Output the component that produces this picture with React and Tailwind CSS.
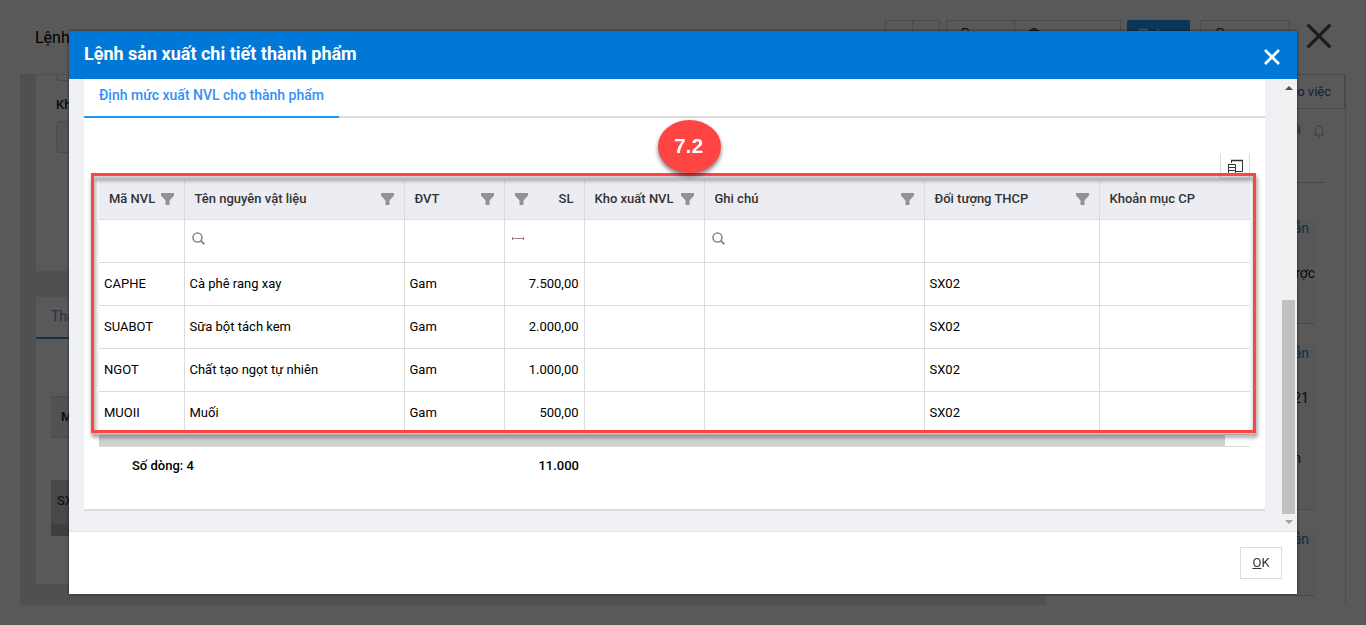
import { FaRegCopy, FaRegFloppyDisk, FaRegTrashCan } from "react-icons/fa6";

const columns = [
  { title: "Mã NVL", field: "code", filter: true, width: "w-[85px]" },
  { title: "Tên nguyên vật liệu", field: "name", filter: true, search: true, width: "w-[220px]" },
  { title: "ĐVT", field: "unit", filter: true, width: "w-[100px]" },
  { title: "SL", field: "qty", filter: true, range: true, right: true, width: "w-[80px]" },
  { title: "Kho xuất NVL", field: "store", filter: true, width: "w-[120px]" },
  { title: "Ghi chú", field: "note", filter: true, search: true, width: "w-[220px]" },
  { title: "Đối tượng THCP", field: "target", filter: true, width: "w-[175px]" },
  { title: "Khoản mục CP", field: "item", width: "" },
];

const rows = [
  { code: "CAPHE", name: "Cà phê rang xay", unit: "Gam", qty: "7.500,00", target: "SX02" },
  { code: "SUABOT", name: "Sữa bột tách kem", unit: "Gam", qty: "2.000,00", target: "SX02" },
  { code: "NGOT", name: "Chất tạo ngọt tự nhiên", unit: "Gam", qty: "1.000,00", target: "SX02" },
  { code: "MUOII", name: "Muối", unit: "Gam", qty: "500,00", target: "SX02" },
];

const notes = [
  { link: "Hướng dẫn", text: "Được", textPad: "pr-0", height: "h-[105px]" },
  { link: "Hướng dẫn", text: "2021", more: "bản", textPad: "pr-1.5", height: "h-[166px]" },
  { link: "Hướng dẫn", text: "", textPad: "pr-1.5", height: "h-[66px]" },
];

function CloseIcon({ className, strokeWidth }) {
  return (
    <svg viewBox="0 0 24 24" className={className} fill="none" stroke="currentColor" strokeWidth={strokeWidth}>
      <path d="M1.500 1.500 22.500 22.500M22.500 1.500 1.500 22.500" />
    </svg>
  );
}

function FilterIcon() {
  return (
    <svg viewBox="0 0 13 12" className="h-3 w-[13px] shrink-0" fill="#929292">
      <path d="M0 0h13v2.500L8.500 7.500V12h-4V7.500L0 2.500z" />
    </svg>
  );
}

function SearchIcon() {
  return (
    <svg viewBox="0 0 13 13" className="size-[13px]" fill="none" stroke="#8a8a8a">
      <circle cx="5.500" cy="5.500" r="4.500" strokeWidth="1.600" />
      <path d="M8.800 8.800 12.300 12.300" strokeWidth="2" />
    </svg>
  );
}

function PageHeader() {
  return (
    <header className="flex h-[74px] items-start pt-5 pl-[35px] pr-[34px]">
      <h1 className="flex-1 pt-1.5 text-base leading-6 text-black">Lệnh</h1>
      <span className="mr-1 pt-2 text-[13px] leading-5 font-medium">2 / 10</span>
      <div className="mr-1.5 flex">
        <button type="button" aria-label="Trước" className="h-8 w-7 border border-[#d4d4d4]">‹</button>
        <button type="button" aria-label="Sau" className="-ml-px h-8 w-7 border border-[#d4d4d4]">›</button>
      </div>
      <div className="mr-1.5 flex">
        <button type="button" className="flex h-8 w-[69px] items-center gap-1.5 border border-[#d4d4d4] px-[11px] pb-1 text-[13px]">
          <FaRegCopy className="size-3" />
          sao
        </button>
        <button type="button" className="-ml-px flex h-8 w-[107px] items-center gap-1.5 border border-[#d4d4d4] px-[13px] pb-1 text-[13px]">
          <FaRegTrashCan className="size-3" />
          xoa
        </button>
      </div>
      <button type="button" className="mr-2.5 flex h-8 w-[63px] items-center gap-1.5 rounded-xs bg-[#1f9bff] px-[11px] pb-1 text-[13px] text-white">
        <FaRegFloppyDisk className="size-3" />
        In
      </button>
      <button type="button" className="mr-4 flex h-8 w-[90px] items-center gap-1.5 rounded-xs border border-[#d4d4d4] px-3 pb-1 text-[13px] text-[#223a6b]">
        <FaRegCopy className="size-3" />
        xem
      </button>
      <button type="button" aria-label="Đóng trang" className="mt-[3px]">
        <CloseIcon className="size-[26px] text-[#505050]" strokeWidth={3} />
      </button>
    </header>
  );
}

function PageBody() {
  return (
    <div className="flex flex-1 px-5 pb-5">
      <main className="flex flex-1 flex-col bg-[#e4e4e4] px-4 pt-px pb-[21px]">
        <section className="h-[196px] bg-white px-5">
          <div className="h-1.5 w-60 rounded-b border border-t-0 border-[#d4d4d4]" />
          <label htmlFor="store" className="mt-3.5 block text-[13px] leading-5 font-medium">Kho</label>
          <input id="store" className="mt-1.5 h-8 w-60 rounded border border-[#d4d4d4] bg-[#f4f4f4]" />
        </section>
        <section className="mt-[26px] flex-1 bg-white">
          <div className="flex border-b border-[#d4d4d4]">
            <a href="#thanh-pham" className="-mb-px border-b-2 border-[#2196f3] px-[15px] pt-2 pb-2.5 text-sm leading-[22px] text-[#5b8fd8]">Thành</a>
          </div>
          <div className="mx-[15px] mt-[57px] h-[42px] border-y border-[#d0d0d0] bg-[#e9ebf1] px-2.5 text-[13px] leading-10 font-medium">Mã</div>
          <div className="mx-[15px] mt-[42px] h-11 bg-[#cdcdcd] px-1.5 text-[13px] leading-[42px]">SX02</div>
          <div className="mx-[15px] h-3 bg-[#b4b4b4]" />
        </section>
      </main>
      <aside className="w-[300px] border-r border-[#d8d8d8]">
        <div className="flex h-[35px] items-center justify-end border border-[#d0d0d0] pr-[13px] text-[13px] text-[#2368ad]">Giao việc</div>
        <div className="mr-5 flex h-[74px] items-start justify-end gap-3 border-b border-[#c8c8c8] pt-[11px] text-[13px] leading-5 text-[#2a7ab8]">
          Trao đổi
          <svg viewBox="0 0 12 14" className="mt-1 h-3.5 w-3" fill="none" stroke="#a4b8c8">
            <path d="M1 11h10L9.500 9V5.500a3.500 3.500 0 0 0-7 0V9zM5 13h2M6 1v1" />
          </svg>
        </div>
        <div className="mt-9 mr-[30px] flex flex-col gap-5">
          {notes.map((note, index) => (
            <div key={index} className={`border-b border-[#d4d4d4] bg-[#fafafa] text-right text-sm ${note.height}`}>
              <a href="#note" className="block pr-1.5 leading-[18px] text-[#2a86c0]">{note.link}</a>
              <p className={`mt-[27px] leading-[18px] ${note.textPad}`}>{note.text}</p>
              <p className="mt-[42px] pr-3.5 leading-[18px]">{note.more}</p>
            </div>
          ))}
        </div>
      </aside>
    </div>
  );
}

function MaterialTable() {
  return (
    <table className="w-full table-fixed border-collapse text-[13px] leading-5 text-black">
      <thead>
        <tr className="h-10 bg-[#ebedf2] text-[#333]">
          {columns.map((col) => (
            <th key={col.field} className={`border-r border-b border-[#dcdcdc] px-2.5 text-left font-medium last:border-r-0 ${col.width}`}>
              <div className={`flex items-center justify-between whitespace-nowrap ${col.right ? "flex-row-reverse" : ""}`}>
                {col.title}
                {col.filter && <FilterIcon />}
              </div>
            </th>
          ))}
        </tr>
      </thead>
      <tbody>
        <tr className="h-[43px]">
          {columns.map((col) => (
            <td key={col.field} className="border-r border-b border-[#dcdcdc] px-[7px] pb-1 last:border-r-0">
              {col.search && <SearchIcon />}
              {col.range && (
                <svg viewBox="0 0 12 5" className="h-[5px] w-3" fill="none" stroke="#a07a80">
                  <path d="M.5 1v3M11.500 1v3M.5 2.500h11" />
                </svg>
              )}
            </td>
          ))}
        </tr>
        {rows.map((row) => (
          <tr key={row.code} className="h-[43px]">
            {columns.map((col) => (
              <td key={col.field} className={`border-r border-b border-[#dcdcdc] px-[5px] whitespace-nowrap last:border-r-0 ${col.right ? "text-right" : ""}`}>
                {row[col.field]}
              </td>
            ))}
          </tr>
        ))}
      </tbody>
    </table>
  );
}

function DetailDialog() {
  return (
    <div role="dialog" aria-labelledby="dialog-title" className="relative flex flex-1 flex-col bg-white shadow-[0_0_3px_rgba(0,0,0,0.6)]">
      <div className="flex h-12 items-center justify-between bg-[#0078d7] pr-[17px] pl-[15px] text-white">
        <h2 id="dialog-title" className="pb-0.5 text-lg leading-6 font-bold">Lệnh sản xuất chi tiết thành phẩm</h2>
        <button type="button" aria-label="Đóng" className="pt-1">
          <CloseIcon className="size-4" strokeWidth={4} />
        </button>
      </div>

      <div className="flex flex-1 bg-[#f0f1f4] pl-[15px]">
        <div className="flex-1 pb-5">
          <div className="flex h-full flex-col border-b-2 border-[#dcdcdc] bg-white">
            <div className="flex h-[39px] shrink-0 border-b-2 border-[#dcdcdc]">
              <a href="#dinh-muc" className="-mb-0.5 border-b-2 border-[#2196f3] px-[15px] pt-1.5 text-sm leading-5 font-medium text-[#3390f5]">
                Định mức xuất NVL cho thành phẩm
              </a>
            </div>
            <div className="flex h-[61px] shrink-0 items-end justify-end px-[15px]">
              <button type="button" aria-label="Chọn cột" className="flex h-[26px] w-[30px] justify-center rounded-xs border border-t-0 border-[#dcdcdc] pt-1.5">
                <svg viewBox="0 0 17 15" className="h-[15px] w-[17px]" fill="none" stroke="#333">
                  <path d="M4.500 4V1.500h11v11H9M1 5.500h7.500v9H1.500v-9M1.500 8.500h7M1.500 11.500h7" />
                  <path d="M4 1.500h12" strokeWidth="1.500" />
                </svg>
              </button>
            </div>
            <div className="mx-[15px]">
              <MaterialTable />
              <div className="h-3 border-b border-[#dcdcdc] pr-[25px]">
                <div className="h-[11px] bg-[#d0d0d0]" />
              </div>
              <div className="flex h-[38px] items-center text-[13px] leading-5 font-medium text-black">
                <span className="w-[305px] pl-[33px]">Số dòng: 4</span>
                <span className="w-[175px] text-right">11.000</span>
              </div>
            </div>
          </div>
        </div>
        <div className="ml-[15px] flex w-[17px] flex-col items-center bg-[#f1f1f1] py-[7px]">
          <svg viewBox="0 0 8 4" className="h-1 w-2" fill="#505050"><path d="M0 4 4 0l4 4z" /></svg>
          <div className="mt-auto mb-1.5 h-[214px] w-[13px] bg-[#c1c1c1]" />
          <svg viewBox="0 0 8 4" className="h-1 w-2" fill="#a0a0a0"><path d="M0 0h8L4 4z" /></svg>
        </div>
      </div>

      <div className="flex h-[63px] items-center justify-end border-t border-[#e2e2e2] pr-[15px]">
        <button type="button" className="h-8 w-[42px] border border-[#dcdcdc] text-[13px] text-[#333]">
          <u>O</u>K
        </button>
      </div>

      {/* step marker over the table */}
      <div className="pointer-events-none absolute top-[142px] right-[41px] left-[22px] h-[260px] border-3 border-[#ff4444] drop-shadow-[1px_4px_2px_rgba(0,0,0,0.5)]" />
      <div className="absolute top-[89px] left-[589px] flex h-[53px] w-[63px] items-center justify-center rounded-[50%] bg-[#ff4444] pr-0.5 pb-0.5 font-['Liberation_Sans',sans-serif] text-[21px] font-bold text-white drop-shadow-[0_3px_2px_rgba(0,0,0,0.5)]">
        7.2
      </div>
    </div>
  );
}

export default function App() {
  return (
    <div className="flex min-h-screen flex-col bg-white font-[Roboto,sans-serif] text-[#222]">
      <PageHeader />
      <PageBody />
      <div className="fixed inset-0 flex bg-black/65 px-[69px] py-[31px]">
        <DetailDialog />
      </div>
    </div>
  );
}
